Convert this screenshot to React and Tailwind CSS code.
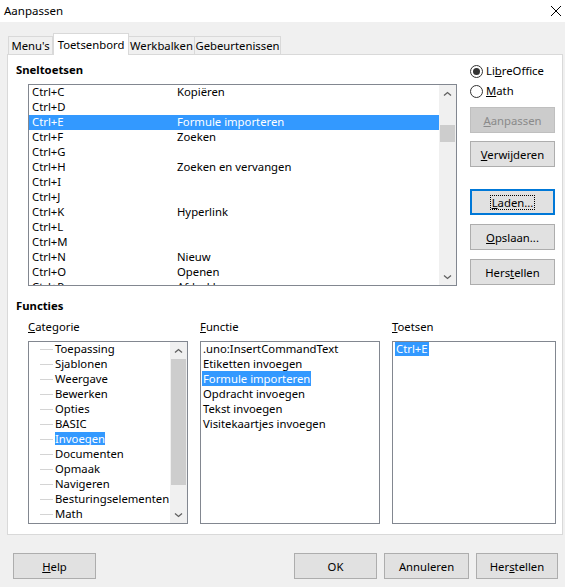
import React from 'react';

const shortcuts = [
  ['Ctrl+C', 'Kopiëren'],
  ['Ctrl+D', ''],
  ['Ctrl+E', 'Formule importeren'],
  ['Ctrl+F', 'Zoeken'],
  ['Ctrl+G', ''],
  ['Ctrl+H', 'Zoeken en vervangen'],
  ['Ctrl+I', ''],
  ['Ctrl+J', ''],
  ['Ctrl+K', 'Hyperlink'],
  ['Ctrl+L', ''],
  ['Ctrl+M', ''],
  ['Ctrl+N', 'Nieuw'],
  ['Ctrl+O', 'Openen'],
  ['Ctrl+P', 'Afdrukken'],
];

const categories = [
  'Toepassing', 'Sjablonen', 'Weergave', 'Bewerken', 'Opties', 'BASIC',
  'Invoegen', 'Documenten', 'Opmaak', 'Navigeren', 'Besturingselementen', 'Math',
];

const functions = [
  '.uno:InsertCommandText',
  'Etiketten invoegen',
  'Formule importeren',
  'Opdracht invoegen',
  'Tekst invoegen',
  'Visitekaartjes invoegen',
];

function Chevron({ down }) {
  return (
    <svg width="9" height="6" viewBox="0 0 9 6">
      <path
        d={down ? 'M1 1.5 L4.5 4.5 L8 1.5' : 'M1 4.5 L4.5 1.5 L8 4.5'}
        fill="none"
        stroke="#606060"
        strokeWidth="1.3"
      />
    </svg>
  );
}

function ScrollBar({ gap, thumb }) {
  return (
    <div className="w-[17px] h-full flex flex-col bg-[#f0f0f0] shrink-0">
      <div className="h-[17px] flex items-center justify-center shrink-0"><Chevron /></div>
      <div className="shrink-0" style={{ height: gap }} />
      <div className="mx-[1px] bg-[#cdcdcd] shrink-0" style={{ height: thumb }} />
      <div className="flex-1" />
      <div className="h-[17px] flex items-center justify-center shrink-0"><Chevron down /></div>
    </div>
  );
}

function Btn({ children, className = '', disabled, focused }) {
  let look = 'bg-[#e1e1e1] border border-[#adadad] text-black';
  if (disabled) look = 'bg-[#cccccc] border border-[#bfbfbf] text-[#8a8a8a]';
  if (focused) look = 'bg-[#e1e1e1] border-2 border-[#0078d7] text-black';
  return (
    <div className={`h-[26px] flex items-center justify-center leading-[15px] ${look} ${className}`}>
      {children}
    </div>
  );
}

function Radio({ checked, children }) {
  return (
    <div className="h-[16px] flex items-center">
      <span className="w-[13px] h-[13px] rounded-full border border-[#333333] bg-white flex items-center justify-center">
        {checked && <span className="w-[7px] h-[7px] rounded-full bg-[#333333]" />}
      </span>
      <span className="ml-[3px]">{children}</span>
    </div>
  );
}

export default function App() {
  return (
    <div className="w-[565px] h-[587px] bg-[#f0f0f0] text-black text-[11.3px] font-['Noto_Sans',sans-serif] overflow-hidden">
      {/* Titelbalk */}
      <div className="h-[22px] bg-white flex items-center justify-between pl-[4px] pr-[3px]">
        <span className="text-[11.5px]">Aanpassen</span>
        <svg width="12" height="12" viewBox="0 0 12 12">
          <path d="M1 1 L11 11 M11 1 L1 11" stroke="#000" strokeWidth="1" />
        </svg>
      </div>

      {/* Tabbladen */}
      <div className="pt-[10px] pl-[8px] h-[32px] flex items-end leading-[15px]">
        <div className="w-[45px] h-[18px] border border-b-0 border-[#d9d9d9] flex items-center justify-center">Menu's</div>
        <div className="w-[76px] h-[22px] -mb-px relative z-10 bg-white border border-b-0 border-[#d9d9d9] flex items-center justify-center">Toetsenbord</div>
        <div className="w-[66px] h-[18px] border border-l-0 border-b-0 border-[#d9d9d9] flex items-center justify-center">Werkbalken</div>
        <div className="w-[86px] h-[18px] border border-l-0 border-b-0 border-[#d9d9d9] flex items-center justify-center">Gebeurtenissen</div>
      </div>

      {/* Paneel */}
      <div className="ml-[7px] w-[556px] h-[481px] bg-white border border-[#d9d9d9]">
        <div className="flex pt-[8px]">
          <div className="w-[449px]">
            <div className="pl-[8px] h-[16px] leading-[14px] font-bold">Sneltoetsen</div>
            <div className="ml-[20px] mt-[5px] w-[429px] h-[202px] border border-[#828790] flex overflow-hidden">
              <div className="flex-1 overflow-hidden">
                {shortcuts.map(([key, name]) => {
                  const sel = key === 'Ctrl+E';
                  return (
                    <div
                      key={key}
                      className={`h-[15px] leading-[13px] flex pl-[3px] whitespace-nowrap ${sel ? 'bg-[#3399ff] text-white' : ''}`}
                    >
                      <span className="w-[145px] shrink-0">{key}</span>
                      <span>{name}</span>
                    </div>
                  );
                })}
              </div>
              <ScrollBar gap={23} thumb={17} />
            </div>
          </div>

          <div className="ml-[13px] w-[85px]">
            <Radio checked>Li<u>b</u>reOffice</Radio>
            <div className="mt-[4px]"><Radio><u>M</u>ath</Radio></div>
            <Btn disabled className="mt-[8px]"><span><u>A</u>anpassen</span></Btn>
            <Btn className="mt-[8px]"><span><u>V</u>erwijderen</span></Btn>
            <Btn focused className="mt-[22px]">
              <span className="outline outline-1 outline-dotted outline-black px-[1px] leading-[13px]"><u>L</u>aden...</span>
            </Btn>
            <Btn className="mt-[9px]"><span><u>O</u>pslaan...</span></Btn>
            <Btn className="mt-[9px]"><span>Hers<u>t</u>ellen</span></Btn>
          </div>
        </div>

        <div className="mt-[13px] pl-[8px] h-[16px] leading-[14px] font-bold">Functies</div>

        <div className="mt-[5px] pl-[20px] flex gap-[12px] h-[16px] leading-[14px]">
          <div className="w-[160px]"><u>C</u>ategorie</div>
          <div className="w-[180px]"><u>F</u>unctie</div>
          <div className="w-[164px]"><u>T</u>oetsen</div>
        </div>

        <div className="mt-[5px] pl-[20px] flex gap-[12px]">
          {/* Categorie */}
          <div className="w-[160px] h-[183px] border border-[#828790] flex overflow-hidden">
            <div className="flex-1 overflow-hidden">
              {categories.map(c => (
                <div key={c} className="h-[15px] leading-[13px] flex items-start whitespace-nowrap">
                  <span className="mt-[7px] ml-[11px] w-[13px] border-t border-[#d4d4d4]" />
                  <span className={`ml-[2px] ${c === 'Invoegen' ? 'bg-[#3399ff] text-white' : ''}`}>{c}</span>
                </div>
              ))}
            </div>
            <ScrollBar gap={0} thumb={126} />
          </div>

          {/* Functie */}
          <div className="w-[180px] h-[183px] border border-[#828790] overflow-hidden">
            {functions.map(f => (
              <div key={f} className="h-[15px] leading-[13px] pl-[1px] whitespace-nowrap">
                <span className={`px-[1px] ${f === 'Formule importeren' ? 'bg-[#3399ff] text-white' : ''}`}>{f}</span>
              </div>
            ))}
          </div>

          {/* Toetsen */}
          <div className="w-[164px] h-[183px] border border-[#828790] overflow-hidden">
            <div className="h-[15px] leading-[13px] pl-[2px]">
              <span className="bg-[#3399ff] text-white px-[1px]">Ctrl+E</span>
            </div>
          </div>
        </div>
      </div>

      {/* Knoppen onderaan */}
      <div className="mt-[18px] flex pl-[13px] pr-[7px]">
        <Btn className="w-[83px]"><span><u>H</u>elp</span></Btn>
        <div className="ml-auto flex gap-[7px]">
          <Btn className="w-[83px]">OK</Btn>
          <Btn className="w-[85px]">Annuleren</Btn>
          <Btn className="w-[82px]"><span>Her<u>s</u>tellen</span></Btn>
        </div>
      </div>
    </div>
  );
}
